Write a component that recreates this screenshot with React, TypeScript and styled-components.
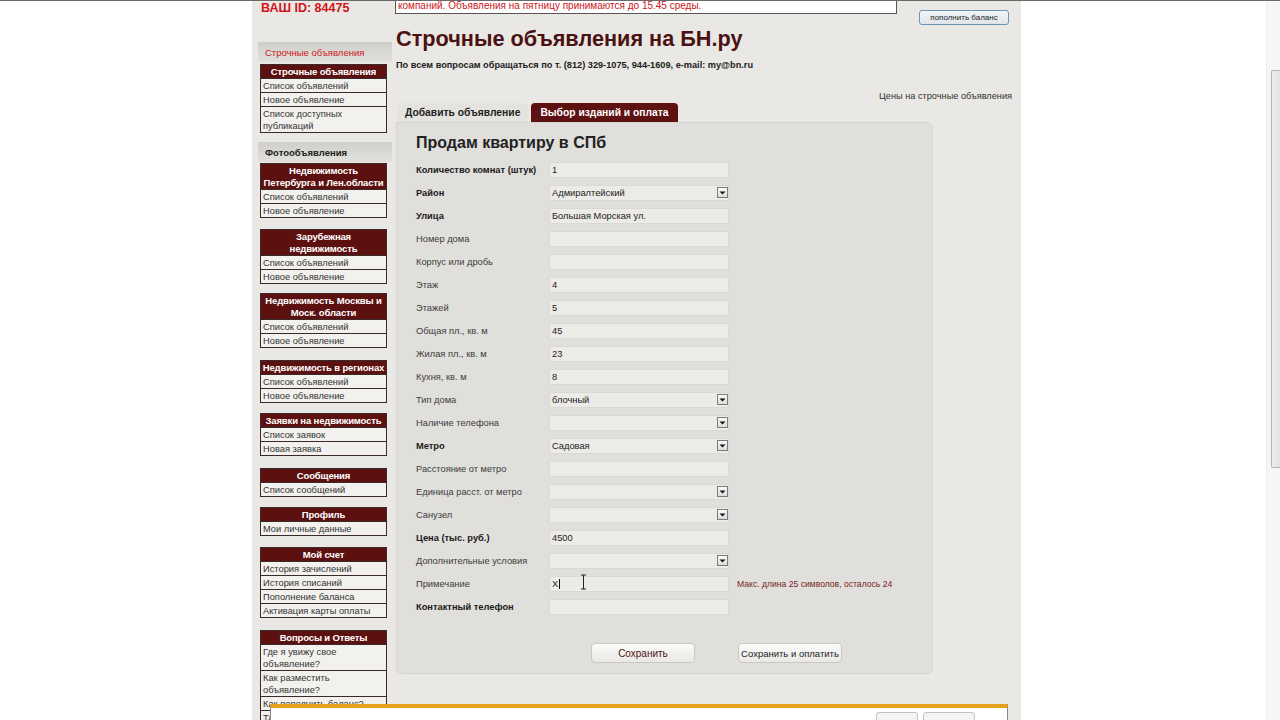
import React from "react";
import styled, { createGlobalStyle } from "styled-components";

const GlobalStyle = createGlobalStyle`
  html, body {
    margin: 0;
    padding: 0;
    background: #ffffff;
    font-family: "Liberation Sans", Arial, sans-serif;
    overflow: hidden;
  }
`;

const TopEdge = styled.div`
  height: 1px;
  background: #6a6a6a;
`;

const Page = styled.div`
  width: 1280px;
  height: 719px;
  overflow: hidden;
`;

const Wrapper = styled.div`
  margin-left: 252px;
  width: 769px;
  min-height: 760px;
  background: #e9e8e4;
  display: grid;
  grid-template-columns: 140px 1fr;
`;

const Sidebar = styled.aside`
  display: flex;
  flex-direction: column;
`;

const UserId = styled.div`
  color: #d0151a;
  font-weight: bold;
  font-size: 12.5px;
  line-height: 14px;
  padding-left: 9px;
  height: 41px;
`;

const SectionTitle = styled.div<{ $accent?: boolean; $after: number }>`
  margin-left: 6px;
  height: 20px;
  display: flex;
  align-items: center;
  padding-left: 7px;
  font-size: 9.5px;
  color: ${(p) => (p.$accent ? "#d0151a" : "#222")};
  font-weight: ${(p) => (p.$accent ? "normal" : "bold")};
  background: linear-gradient(#cfcecb, #e2e1de);
  margin-bottom: ${(p) => p.$after}px;
`;

const Box = styled.div<{ $gap: number }>`
  margin: 0 5px ${(p) => p.$gap}px 8px;
  border: 1px solid #3a2a2a;
  background: #f2f1ee;
`;

const BoxHead = styled.div`
  background: #5c1010;
  color: #ffffff;
  font-weight: bold;
  font-size: 9.5px;
  letter-spacing: -0.15px;
  line-height: 12px;
  text-align: center;
  padding: 1px 0 0;
  white-space: pre;
`;

const BoxItem = styled.div`
  font-size: 9.3px;
  line-height: 12px;
  color: #333;
  padding: 1px 2px 0;
  border-top: 1px solid #3a2a2a;
  white-space: pre;
`;

const Main = styled.main`
  padding: 0 9px 0 4px;
  display: flex;
  flex-direction: column;
`;

const TopRow = styled.div`
  display: flex;
  align-items: flex-start;
`;

const Notice = styled.div`
  width: 498px;
  height: 12px;
  border: 1px solid #555;
  border-top: none;
  background: #ffffff;
  color: #c8161b;
  font-size: 10px;
  line-height: 10px;
  padding-left: 2px;
  white-space: nowrap;
  overflow: hidden;
  margin-left: -1px;
`;

const BalanceButton = styled.button`
  margin: 9px 3px 0 auto;
  width: 90px;
  height: 15px;
  font-family: inherit;
  font-size: 8px;
  color: #222;
  border: 1px solid #6f94b4;
  border-radius: 3px;
  background: linear-gradient(#f4f6f8, #dfe4e8);
  padding: 0;
`;

const Title = styled.h1`
  margin: 1px 0 0 0;
  font-size: 21.7px;
  line-height: 26px;
  color: #4b1212;
  font-weight: bold;
`;

const Contact = styled.div`
  margin-top: 7px;
  font-size: 9.2px;
  line-height: 12px;
  font-weight: bold;
  color: #222;
`;

const PriceLink = styled.div`
  margin-top: 19px;
  text-align: right;
  font-size: 9.2px;
  line-height: 12px;
  color: #333;
`;

const Tabs = styled.div`
  display: flex;
  gap: 3px;
  margin-top: 1px;
  padding-left: 1px;
`;

const Tab = styled.div<{ $active?: boolean }>`
  height: 19px;
  padding: 0 ${(p) => (p.$active ? 9 : 8)}px;
  display: flex;
  align-items: center;
  font-size: 10.3px;
  font-weight: bold;
  border-radius: 4px 4px 0 0;
  color: ${(p) => (p.$active ? "#ffffff" : "#222")};
  background: ${(p) => (p.$active ? "#5e1111" : "#e4e3df")};
`;

const Panel = styled.section`
  width: 537px;
  height: 552px;
  box-sizing: border-box;
  background: #e0dfdb;
  border: 1px solid #d6d5d1;
  border-radius: 0 6px 6px 6px;
  padding: 9px 0 0 19px;
  display: flex;
  flex-direction: column;
`;

const FormTitle = styled.h2`
  margin: 0 0 4px 0;
  font-size: 16px;
  line-height: 22px;
  color: #222;
  font-weight: bold;
`;

const Row = styled.div`
  display: grid;
  grid-template-columns: 133px 180px auto;
  align-items: center;
  height: 23px;
`;

const Label = styled.div<{ $bold?: boolean }>`
  font-size: 9.3px;
  color: ${(p) => (p.$bold ? "#1a1a1a" : "#3c3c3c")};
  font-weight: ${(p) => (p.$bold ? "bold" : "normal")};
`;

const Field = styled.div`
  position: relative;
  height: 16px;
  box-sizing: border-box;
  background: #ecebe7;
  border: 1px solid #dad9d5;
  border-radius: 1px;
  font-size: 9.3px;
  line-height: 14px;
  color: #222;
  padding-left: 2px;
  display: flex;
  align-items: center;
`;

const SelectButton = styled.div`
  margin-left: auto;
  width: 11px;
  height: 11px;
  box-sizing: border-box;
  border: 1px solid #7b7b7b;
  background: linear-gradient(#fafafa, #dcdcdc);
  display: flex;
  align-items: center;
  justify-content: center;
`;

const Hint = styled.div`
  padding-left: 8px;
  font-size: 8.6px;
  color: #7a1e1e;
  white-space: nowrap;
`;

const Caret = styled.span`
  display: inline-block;
  width: 1px;
  height: 10px;
  background: #111;
  margin-left: 1px;
`;

const Buttons = styled.div`
  display: flex;
  margin-top: 25px;
  padding-left: 175px;
  gap: 43px;
`;

const Button = styled.button<{ $wide?: boolean }>`
  width: 104px;
  height: 20px;
  font-family: inherit;
  font-size: ${(p) => (p.$wide ? 9.5 : 10)}px;
  white-space: nowrap;
  color: ${(p) => (p.$wide ? "#222" : "#4b1212")};
  border: 1px solid #c9c8c4;
  border-radius: 4px;
  background: linear-gradient(#fbfbfa, #e9e8e5);
  padding: 0;
`;

const Scrollbar = styled.div`
  position: fixed;
  top: 1px;
  right: 0;
  width: 13px;
  bottom: 0;
  background: #f6f6f6;
  border-left: 1px solid #ececec;
`;

const Thumb = styled.div`
  position: absolute;
  left: 4px;
  right: 0;
  top: 69px;
  height: 396px;
  border: 1px solid #b5b5b5;
  border-right: none;
  border-radius: 2px 0 0 2px;
  background: linear-gradient(90deg, #eeeeee, #e2e2e2);
`;

const Popup = styled.div`
  position: fixed;
  left: 270px;
  width: 738px;
  top: 704px;
  height: 30px;
  background: #ffffff;
  border: 1px solid #8a8a8a;
  border-top: 4px solid #e6a21f;
  display: flex;
  justify-content: flex-end;
  gap: 5px;
  padding: 4px 32px 0 0;
  box-sizing: border-box;
`;

const PopupButton = styled.div<{ $w: number }>`
  width: ${(p) => p.$w}px;
  height: 14px;
  border: 1px solid #c2c2c2;
  border-radius: 3px;
  background: #f4f4f4;
`;

const Cursor = styled.svg`
  position: absolute;
  left: 30px;
  top: -3px;
`;

type FieldDef = {
  label: string;
  value?: string;
  bold?: boolean;
  select?: boolean;
  hint?: string;
  caret?: boolean;
};

const fields: FieldDef[] = [
  { label: "Количество комнат (штук)", value: "1", bold: true },
  { label: "Район", value: "Адмиралтейский", bold: true, select: true },
  { label: "Улица", value: "Большая Морская ул.", bold: true },
  { label: "Номер дома" },
  { label: "Корпус или дробь" },
  { label: "Этаж", value: "4" },
  { label: "Этажей", value: "5" },
  { label: "Общая пл., кв. м", value: "45" },
  { label: "Жилая пл., кв. м", value: "23" },
  { label: "Кухня, кв. м", value: "8" },
  { label: "Тип дома", value: "блочный", select: true },
  { label: "Наличие телефона", select: true },
  { label: "Метро", value: "Садовая", bold: true, select: true },
  { label: "Расстояние от метро" },
  { label: "Единица расст. от метро", select: true },
  { label: "Санузел", select: true },
  { label: "Цена (тыс. руб.)", value: "4500", bold: true },
  { label: "Дополнительные условия", select: true },
  { label: "Примечание", value: "X", caret: true, hint: "Макс. длина 25 символов, осталось 24" },
  { label: "Контактный телефон", bold: true },
];

const groups = [
  { title: "Строчные объявления", items: ["Список объявлений", "Новое объявление", "Список доступных\nпубликаций"], gap: 9 },
  { title: "Недвижимость\nПетербурга и Лен.области", items: ["Список объявлений", "Новое объявление"], gap: 11 },
  { title: "Зарубежная\nнедвижимость", items: ["Список объявлений", "Новое объявление"], gap: 9 },
  { title: "Недвижимость Москвы и\nМоск. области", items: ["Список объявлений", "Новое объявление"], gap: 12 },
  { title: "Недвижимость в регионах", items: ["Список объявлений", "Новое объявление"], gap: 10 },
  { title: "Заявки на недвижимость", items: ["Список заявок", "Новая заявка"], gap: 12 },
  { title: "Сообщения", items: ["Список сообщений"], gap: 10 },
  { title: "Профиль", items: ["Мои личные данные"], gap: 11 },
  { title: "Мой счет", items: ["История зачислений", "История списаний", "Пополнение баланса", "Активация карты оплаты"], gap: 12 },
  { title: "Вопросы и Ответы", items: ["Где я увижу свое\nобъявление?", "Как разместить\nобъявление?", "Как пополнить баланс?", "Так же"], gap: 10 },
];

const Arrow = () => (
  <svg width="7" height="4" viewBox="0 0 7 4">
    <path d="M0.5 0.5 L6.5 0.5 L3.5 3.5 Z" fill="#111" />
  </svg>
);

const SideBox = ({ title, items, gap }: { title: string; items: string[]; gap: number }) => (
  <Box $gap={gap}>
    <BoxHead>{title}</BoxHead>
    {items.map((item, i) => (
      <BoxItem key={i}>{item}</BoxItem>
    ))}
  </Box>
);

const App = () => (
  <>
    <GlobalStyle />
    <TopEdge />
    <Page>
      <Wrapper>
        <Sidebar>
          <UserId>ВАШ ID: 84475</UserId>
          <SectionTitle $accent $after={2}>Строчные объявления</SectionTitle>
          <SideBox {...groups[0]} />
          <SectionTitle $after={1}>Фотообъявления</SectionTitle>
          {groups.slice(1).map((g, i) => (
            <SideBox key={i} {...g} />
          ))}
        </Sidebar>
        <Main>
          <TopRow>
            <Notice>компаний. Объявления на пятницу принимаются до 15.45 среды.</Notice>
            <BalanceButton>пополнить баланс</BalanceButton>
          </TopRow>
          <Title>Строчные объявления на БН.ру</Title>
          <Contact>По всем вопросам обращаться по т. (812) 329-1075, 944-1609, e-mail: my@bn.ru</Contact>
          <PriceLink>Цены на строчные объявления</PriceLink>
          <Tabs>
            <Tab>Добавить объявление</Tab>
            <Tab $active>Выбор изданий и оплата</Tab>
          </Tabs>
          <Panel>
            <FormTitle>Продам квартиру в СПб</FormTitle>
            {fields.map((f, i) => (
              <Row key={i}>
                <Label $bold={f.bold}>{f.label}</Label>
                <Field>
                  {f.value}
                  {f.caret && <Caret />}
                  {f.caret && (
                    <Cursor width="7" height="16" viewBox="0 0 7 16">
                      <path d="M1 1 H6 M3.5 1 V15 M1 15 H6" stroke="#222" strokeWidth="1" fill="none" />
                    </Cursor>
                  )}
                  {f.select && (
                    <SelectButton>
                      <Arrow />
                    </SelectButton>
                  )}
                </Field>
                {f.hint ? <Hint>{f.hint}</Hint> : <span />}
              </Row>
            ))}
            <Buttons>
              <Button>Сохранить</Button>
              <Button $wide>Сохранить и оплатить</Button>
            </Buttons>
          </Panel>
        </Main>
      </Wrapper>
    </Page>
    <Scrollbar>
      <Thumb />
    </Scrollbar>
    <Popup>
      <PopupButton $w={40} />
      <PopupButton $w={50} />
    </Popup>
  </>
);

export default App;
